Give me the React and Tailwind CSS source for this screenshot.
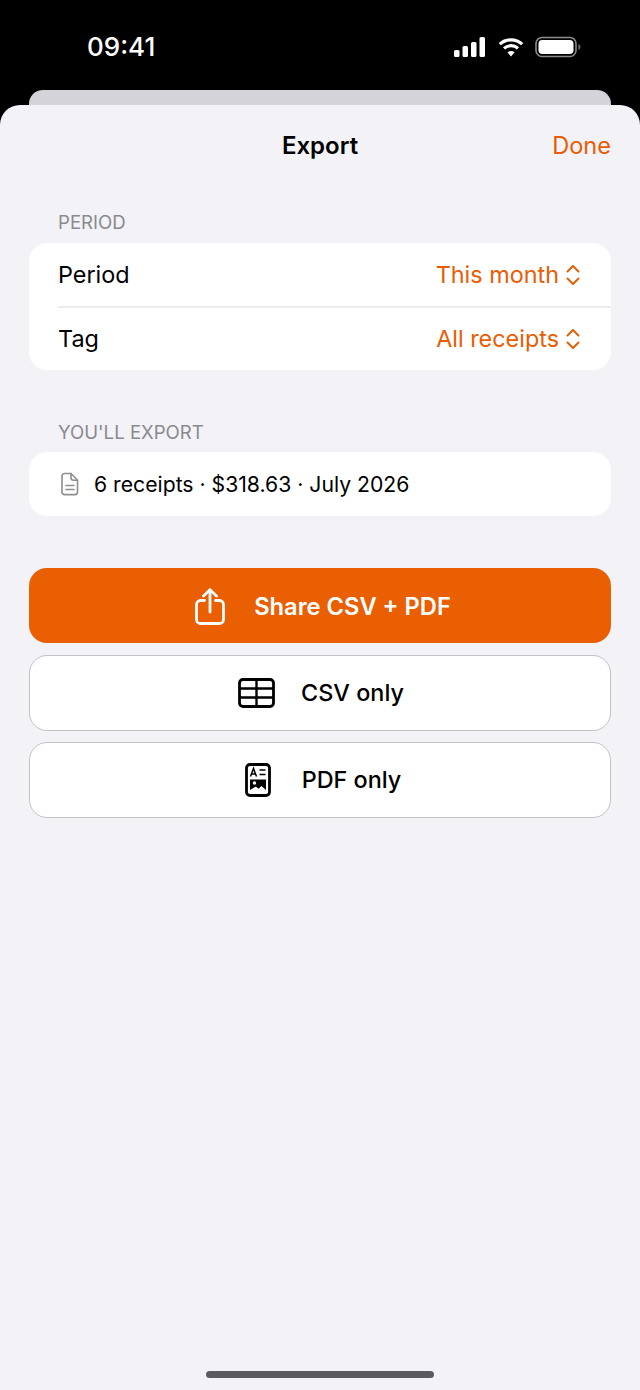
const ORANGE = "text-[#e85d04]";

function StatusIcons() {
  return (
    <div className="mt-[4px] flex items-center">
      <svg width="33" height="22" viewBox="0 0 33 22" fill="white" className="mr-[12px]">
        <rect x="1" y="14" width="5.5" height="7" rx="1.5" />
        <rect x="9.5" y="10" width="5.5" height="11" rx="1.5" />
        <rect x="18" y="6" width="5.5" height="15" rx="1.5" />
        <rect x="26.5" y="1" width="5.5" height="20" rx="1.5" />
      </svg>
      <svg width="26" height="20" viewBox="0 0 26 20" fill="none" stroke="white" strokeWidth="3.2" className="mr-[11px]">
        <path d="M1.8 7.2C8 1.4 18 1.4 24.2 7.2" />
        <path d="M6 11.4c4-3.6 10-3.6 14 0" />
        <path d="M13 19.5l-3.6-4.2c2-1.6 5.2-1.6 7.2 0z" fill="white" stroke="none" />
      </svg>
      <svg width="46" height="22" viewBox="0 0 46 22" fill="none">
        <rect x="1" y="1.5" width="40" height="19" rx="6" stroke="#8a8a8a" strokeWidth="1.6" />
        <rect x="3.5" y="4" width="35" height="14" rx="3.8" fill="white" />
        <path d="M43.4 8c1.3.4 2 1.6 2 3s-.7 2.6-2 3z" fill="#6f6f6f" />
      </svg>
    </div>
  );
}

function Chevrons() {
  return (
    <svg width="16" height="22" viewBox="0 0 16 22" fill="none" stroke="#e85d04" strokeWidth="1.9" strokeLinecap="round" strokeLinejoin="round">
      <path d="M2.5 7.5L8 2l5.5 5.5" />
      <path d="M2.5 14.5L8 20l5.5-5.5" />
    </svg>
  );
}

function DocIcon() {
  return (
    <svg width="18" height="24" viewBox="0 0 18 24" fill="none" stroke="#8e8e93" strokeWidth="1.6" strokeLinecap="round" strokeLinejoin="round">
      <path d="M3.5 1.5h6.5l6.5 6.8v11.7a2.6 2.6 0 0 1-2.6 2.6H3.5A2.6 2.6 0 0 1 1 20V4a2.6 2.6 0 0 1 2.5-2.5z" />
      <path d="M10 1.5v4.3a2.5 2.5 0 0 0 2.5 2.5h4" />
      <path d="M5 13.5h8M5 17.5h8" />
    </svg>
  );
}

function ShareIcon() {
  return (
    <svg width="30" height="38" viewBox="0 0 30 38" fill="none" stroke="white" strokeWidth="2.8" strokeLinecap="round" strokeLinejoin="round" className="mt-[2px]">
      <path d="M9.5 12.5H5.5A4 4 0 0 0 1.5 16.5v15a4 4 0 0 0 4 4h19a4 4 0 0 0 4-4v-15a4 4 0 0 0-4-4h-4" />
      <path d="M15 24V2" />
      <path d="M8.5 8L15 1.7 21.5 8" />
    </svg>
  );
}

function TableIcon() {
  return (
    <svg width="37" height="30" viewBox="0 0 37 30" fill="none" stroke="black">
      <rect x="1.5" y="1.5" width="34" height="27" rx="3.5" strokeWidth="2.8" />
      <path d="M1.5 10.5h34M1.5 19.5h34" strokeWidth="2.4" />
      <path d="M18.5 1.5v27" strokeWidth="2.4" />
    </svg>
  );
}

function ReportIcon() {
  return (
    <svg width="26" height="34" viewBox="0 0 26 34" fill="none">
      <rect x="1.5" y="1.5" width="23" height="31" rx="3.5" stroke="black" strokeWidth="2.8" />
      <path d="M5.5 13.5L8.5 5.5l3 8M6.7 11h3.6" stroke="black" strokeWidth="1.5" />
      <path d="M14.5 7h6M14.5 11.5h6" stroke="black" strokeWidth="1.6" />
      <path d="M5 16.5h16v10.5l-4.5-4-3 2.8-2.7-2.2L5 27z" fill="black" />
      <circle cx="9.5" cy="20" r="1.7" fill="white" />
    </svg>
  );
}

function SectionLabel({ children }) {
  return <div className="ml-[58px] h-[21px] text-[18.6px] leading-[21px] text-[#8a8a8e]">{children}</div>;
}

function PickerRow({ label, value, height }) {
  return (
    <div className={`flex items-center justify-between pr-[30px] ${height}`}>
      <span className="text-[23.4px] leading-[30px] text-black">{label}</span>
      <span className="flex items-center gap-[6px]">
        <span className={`text-[23.4px] leading-[30px] ${ORANGE}`}>{value}</span>
        <Chevrons />
      </span>
    </div>
  );
}

function OutlineButton({ icon, label, gap }) {
  return (
    <button className={`flex h-[76px] w-full items-center justify-center rounded-[18px] border border-[#c2c2c7] bg-white ${gap}`}>
      {icon}
      <span className="text-[23.4px] font-medium leading-[30px] text-black">{label}</span>
    </button>
  );
}

export default function App() {
  return (
    <div className="flex h-[1390px] w-[640px] flex-col bg-black font-['Inter',sans-serif]">
      <div className="flex h-[90px] shrink-0 items-start justify-between pl-[87px] pr-[59px] pt-[32px]">
        <span className="text-[26px] font-medium leading-[30px] text-white">09:41</span>
        <StatusIcons />
      </div>
      <div className="mx-[29px] h-[15px] shrink-0 rounded-t-[14px] bg-[#d4d3d9]" />

      <div className="flex flex-1 flex-col rounded-t-[20px] bg-[#f2f2f7]">
        <div className="relative flex h-[82px] items-center justify-center">
          <span className="text-[24px] font-semibold text-black">Export</span>
          <span className={`absolute right-[29px] text-[23.6px] ${ORANGE}`}>Done</span>
        </div>

        <div className="mt-[25px]">
          <SectionLabel>PERIOD</SectionLabel>
          <div className="mx-[29px] mt-[10px] rounded-[18px] bg-white pl-[29px]">
            <PickerRow label="Period" value="This month" height="h-[63px]" />
            <div className="h-[2px] bg-[#ececf0]" />
            <PickerRow label="Tag" value="All receipts" height="h-[62px]" />
          </div>
        </div>

        <div className="mt-[52px]">
          <SectionLabel>YOU'LL EXPORT</SectionLabel>
          <div className="mx-[29px] mt-[9px] flex h-[64px] items-center gap-[15px] rounded-[18px] bg-white pl-[32px]">
            <DocIcon />
            <span className="text-[21.2px] leading-[28px] text-black">6 receipts · $318.63 · July 2026</span>
          </div>
        </div>

        <div className="mx-[29px] mt-[52px] flex flex-col gap-[12px]">
          <button className="flex h-[75px] w-full items-center justify-center gap-[29px] rounded-[18px] bg-[#e95f02] pl-[6px]">
            <ShareIcon />
            <span className="pt-[2px] text-[23.7px] font-semibold leading-[30px] text-white">Share CSV + PDF</span>
          </button>
          <div className="flex flex-col gap-[11px]">
            <OutlineButton icon={<TableIcon />} label="CSV only" gap="gap-[26px] pl-[2px]" />
            <OutlineButton icon={<ReportIcon />} label="PDF only" gap="gap-[31px] pl-[6px]" />
          </div>
        </div>

        <div className="mx-auto mb-[12px] mt-auto h-[7px] w-[228px] rounded-full bg-[#5a5a5e]" />
      </div>
    </div>
  );
}
